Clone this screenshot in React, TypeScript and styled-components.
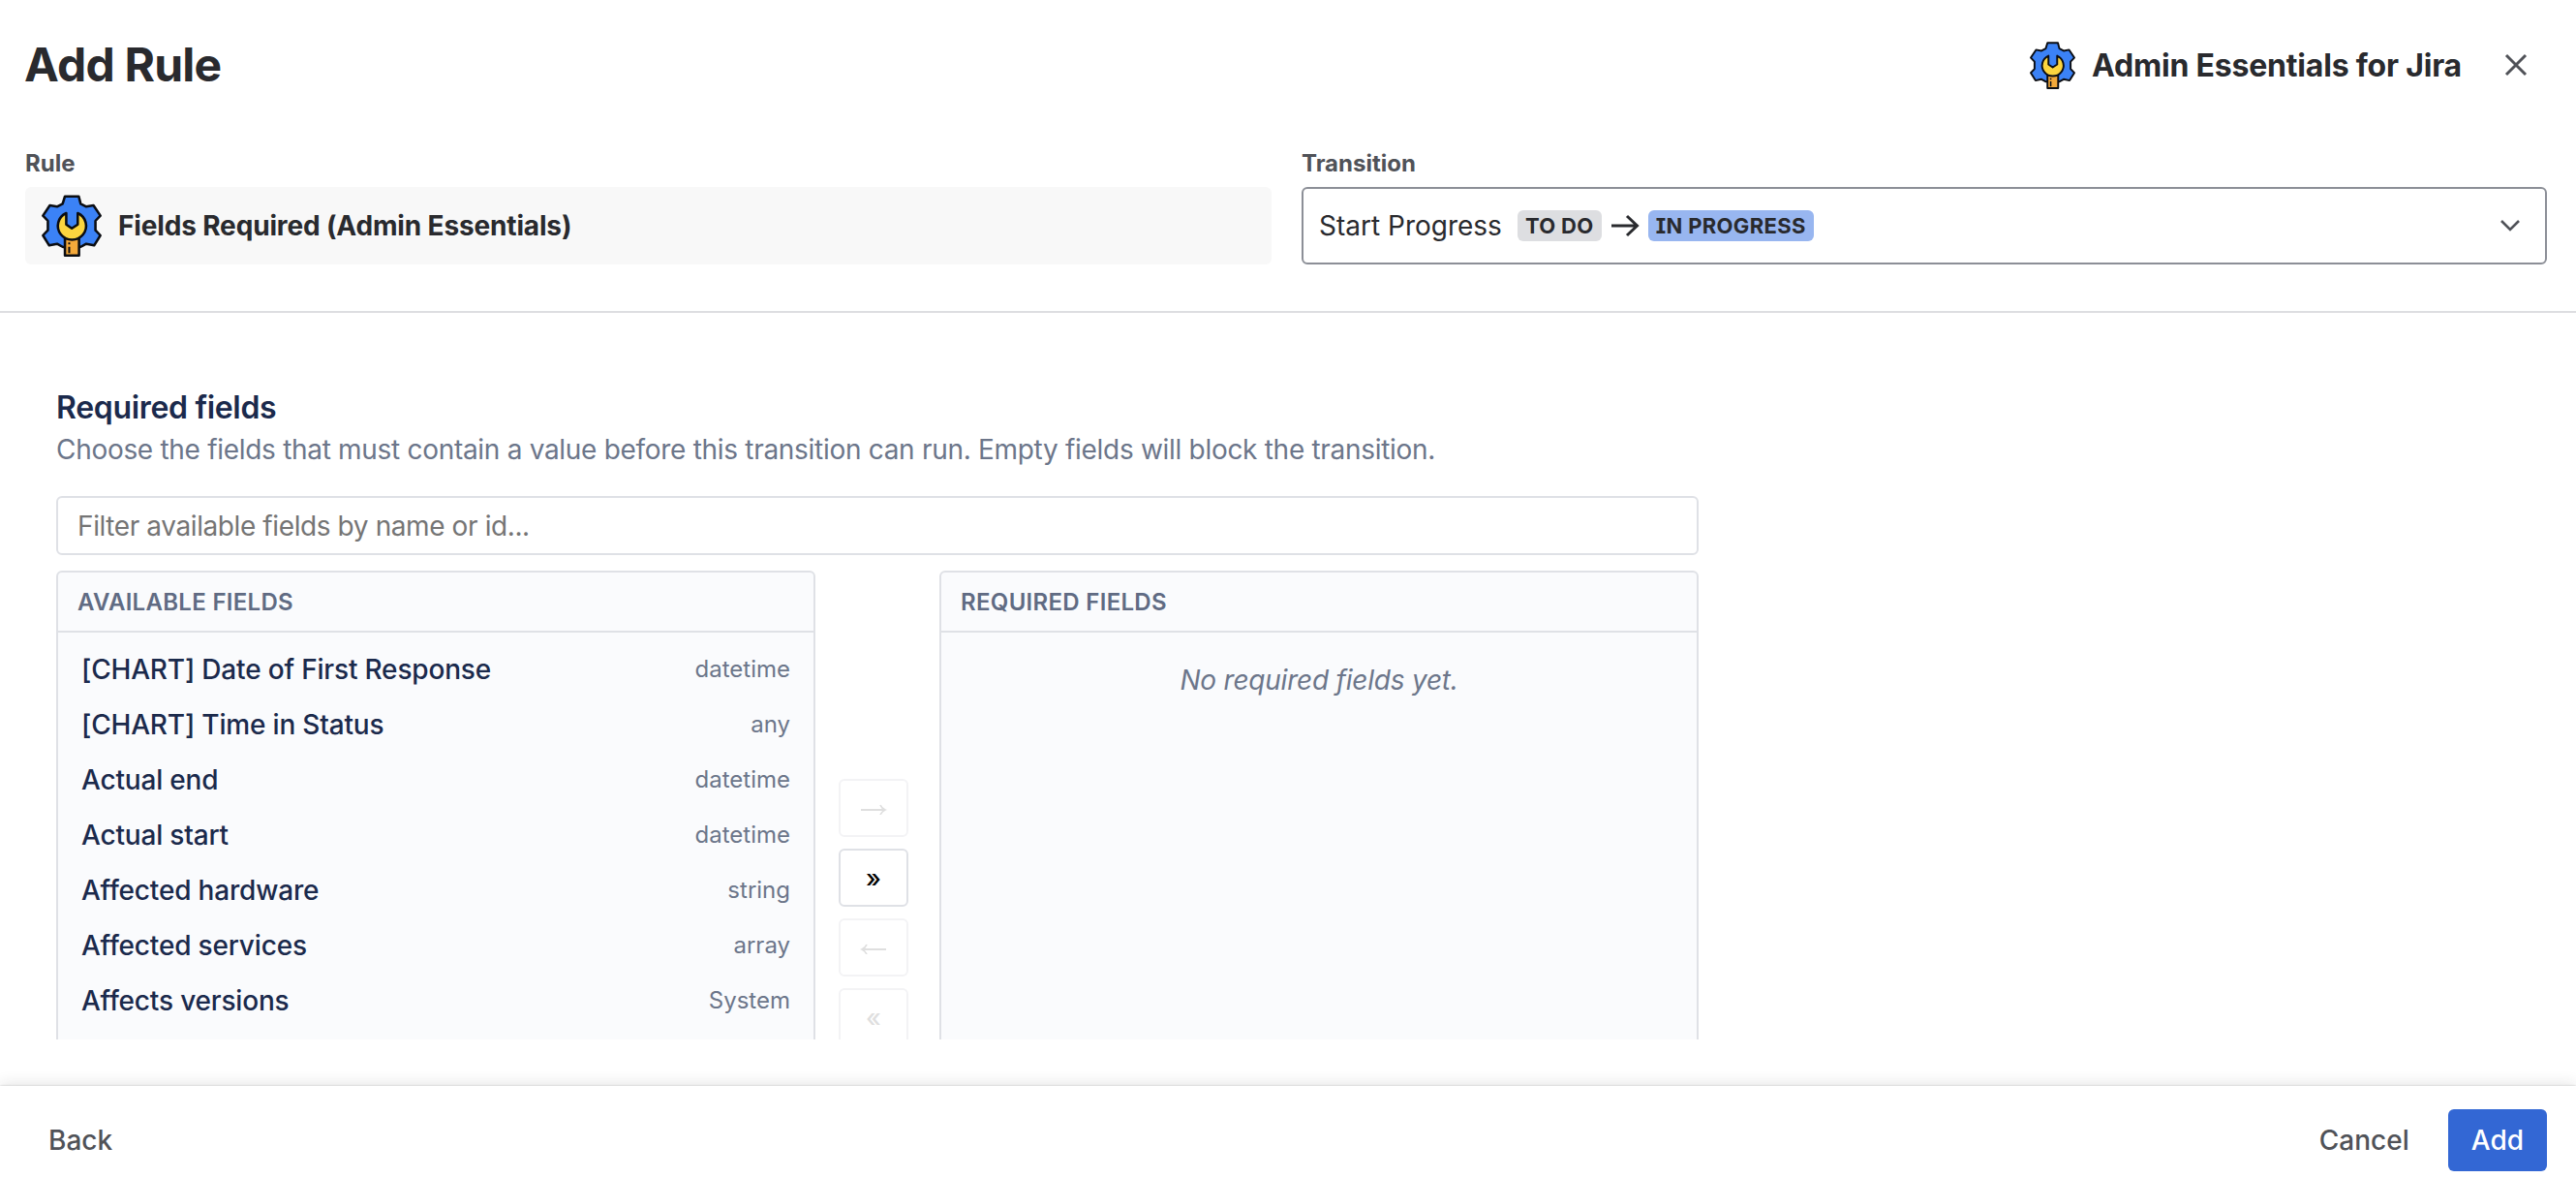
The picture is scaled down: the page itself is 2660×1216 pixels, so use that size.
import React from 'react'
import styled, { createGlobalStyle } from 'styled-components'

const GlobalStyle = createGlobalStyle`
  * {
    box-sizing: border-box;
  }

  body {
    margin: 0;
    background: #fff;
    color: #292a2e;
    font-family: Inter, 'Liberation Sans', sans-serif;
    font-size: 28px;
  }

  button,
  input {
    font-family: inherit;
  }
`

const Modal = styled.div`
  display: flex;
  flex-direction: column;
  height: 1216px;
  overflow: hidden;
`

const Header = styled.header`
  display: flex;
  align-items: center;
  justify-content: space-between;
  height: 134px;
  padding: 0 30px 0 25px;
`

const Title = styled.h1`
  margin: 0 0 2px;
  font-size: 48px;
  font-weight: 680;
  letter-spacing: -0.8px;
`

const Brand = styled.div`
  display: flex;
  align-items: center;
  font-size: 32px;
  font-weight: 660;
  letter-spacing: -0.2px;
`

const BrandName = styled.span`
  margin-left: 17px;
`

const CloseButton = styled.button`
  display: flex;
  align-items: center;
  justify-content: center;
  width: 64px;
  height: 64px;
  margin-left: 24px;
  border: 0;
  background: none;
`

const Selectors = styled.section`
  display: grid;
  grid-template-columns: 1287px 1286px;
  column-gap: 31px;
  height: 189px;
  padding: 20px 30px 0 26px;
  border-bottom: 2px solid #dddee1;
`

const Label = styled.div`
  height: 39px;
  color: #505258;
  font-size: 24px;
  font-weight: 653;
  line-height: 29px;
`

const RuleBox = styled.div`
  display: flex;
  align-items: center;
  height: 80px;
  padding-left: 17px;
  border-radius: 6px;
  background: #f8f8f8;
  font-weight: 653;
  letter-spacing: -0.15px;
`

const RuleName = styled.span`
  margin-left: 17px;
`

const TransitionSelect = styled.div`
  display: flex;
  align-items: center;
  height: 80px;
  padding: 0 26px 0 16px;
  border: 2px solid #8c8f97;
  border-radius: 6px;
`

const TransitionName = styled.span`
  margin-right: 16px;
`

/* cv08 gives the capital I its serifs */
const Lozenge = styled.span<{ $tone: string }>`
  height: 32px;
  padding: 0 8px;
  border-radius: 6px;
  background: ${({ $tone }) => $tone};
  font-size: 22px;
  font-weight: 680;
  line-height: 32px;
  letter-spacing: 0.35px;
  font-feature-settings: 'cv08';
`

const ArrowIcon = styled.svg`
  margin: 0 9px;
`

const ChevronIcon = styled.svg`
  margin-left: auto;
`

const Content = styled.main`
  flex: 1;
  min-height: 0;
  margin-bottom: 48px;
  padding: 76px 0 0 58px;
  overflow: hidden;
`

const SectionTitle = styled.h2`
  margin: 0;
  color: #1b2a4c;
  font-size: 32px;
  font-weight: 620;
  line-height: 44px;
  letter-spacing: -0.32px;
`

const Description = styled.p`
  margin: 0 0 27px;
  color: #6c768a;
  line-height: 42px;
  letter-spacing: -0.3px;
`

const FilterInput = styled.input`
  display: block;
  width: 1696px;
  height: 61px;
  margin-bottom: 16px;
  padding: 0 20px;
  border: 2px solid #dfe1e6;
  border-radius: 6px;
  font-size: 28px;
  letter-spacing: -0.4px;

  &::placeholder {
    color: #757575;
  }
`

const Picker = styled.div`
  display: grid;
  grid-template-columns: 784px 80px 784px;
  column-gap: 24px;
  width: 1696px;
  height: 640px;
`

const Panel = styled.div`
  border: 2px solid #dfe1e6;
  border-radius: 6px;
  background: #fafbfd;
`

const PanelHeader = styled.div`
  height: 62px;
  padding: 1px 0 0 20px;
  border-bottom: 2px solid #dfe1e6;
  color: #606b83;
  font-size: 24px;
  font-weight: 620;
  line-height: 60px;
  letter-spacing: 0.3px;
`

const FieldList = styled.ul`
  margin: 0;
  padding: 9px 24px 0 24px;
  list-style: none;
`

const FieldRow = styled.li`
  display: flex;
  align-items: center;
  justify-content: space-between;
  height: 57px;
  color: #1b2a4c;
  font-weight: 500;
  letter-spacing: -0.18px;
`

const FieldType = styled.span`
  color: #6c768a;
  font-size: 24px;
  font-weight: 400;
  letter-spacing: 0;
`

const EmptyText = styled.div`
  padding-top: 28px;
  color: #6c768a;
  font-style: italic;
  line-height: 42px;
  letter-spacing: -0.22px;
  text-align: center;
`

const Actions = styled.div`
  display: flex;
  flex-direction: column;
  gap: 12px;
  padding-top: 215px;
`

const ActionButton = styled.button`
  display: flex;
  align-items: center;
  justify-content: center;
  width: 72px;
  height: 60px;
  padding: 0;
  border: 2px solid #dfe1e6;
  border-radius: 6px;
  background: #fff;
  color: #000;
  font-size: 26px;
  font-weight: 500;

  &:disabled {
    border-color: #f3f3f5;
    color: #dfdfdf;
  }
`

const Footer = styled.footer`
  display: flex;
  align-items: flex-start;
  height: 95px;
  padding: 24px 30px 0 50px;
  box-shadow: 0 0 2px rgba(30, 31, 33, 0.22), 0 -2px 14px rgba(30, 31, 33, 0.12);
`

const FooterButton = styled.button<{ $primary?: boolean }>`
  height: 64px;
  padding: ${({ $primary }) => ($primary ? '0 24px' : '0')};
  border: 0;
  border-radius: 6px;
  background: ${({ $primary }) => ($primary ? '#3367d4' : 'none')};
  color: ${({ $primary }) => ($primary ? '#fff' : '#505258')};
  font-size: 28px;
  font-weight: 500;
`

const FooterEnd = styled.div`
  display: flex;
  gap: 40px;
  margin-left: auto;
`

const GearLogo: React.FC<{ width: number; height: number }> = ({ width, height }) => (
  <svg width={width} height={height} viewBox="40 33 183 192" preserveAspectRatio="none">
    <g stroke="#0b0d12" strokeWidth="7.5" strokeLinejoin="round">
      <path
        fill="#3b82f6"
        d="M111 38H153L159 61L176 70L198 66L219 98L204 114V143L219 159L200 190L176 185L158 195H105L87 185L63 190L44 159L59 143V114L44 98L65 66L87 70L104 61Z"
      />
      <path fill="#f4a93a" d="M111 168H154V221H111Z" />
      <path fill="#fcd53f" d="M115 90A43 43 0 1 0 150 90V125L132 137L115 125Z" />
    </g>
    <path d="M124 181V187M124 194V214" stroke="#0b0d12" strokeWidth="6" />
  </svg>
)

const MoveIcon: React.FC<{ back?: boolean }> = ({ back }) => (
  <svg width="28" height="14" viewBox="0 0 28 14" fill="none" stroke="currentColor" strokeWidth="1.8">
    <path d={back ? 'M27 9H2M7 4Q5.500 7.500 2 9Q5.500 10.500 7 14' : 'M1 9H26M21 4Q22.500 7.500 26 9Q22.500 10.500 21 14'} />
  </svg>
)

interface Field {
  name: string
  type: string
}

const fields: Field[] = [
  { name: '[CHART] Date of First Response', type: 'datetime' },
  { name: '[CHART] Time in Status', type: 'any' },
  { name: 'Actual end', type: 'datetime' },
  { name: 'Actual start', type: 'datetime' },
  { name: 'Affected hardware', type: 'string' },
  { name: 'Affected services', type: 'array' },
  { name: 'Affects versions', type: 'System' },
]

const App: React.FC = () => {
  return (
    <>
      <GlobalStyle />
      <Modal>
        <Header>
          <Title>Add Rule</Title>
          <Brand>
            <GearLogo width={47} height={49} />
            <BrandName>Admin Essentials for Jira</BrandName>
            <CloseButton aria-label="Close">
              <svg width="24" height="24" viewBox="0 0 24 24" fill="none" stroke="#505258" strokeWidth="3">
                <path d="M2 2L22 22M22 2L2 22" />
              </svg>
            </CloseButton>
          </Brand>
        </Header>
        <Selectors>
          <div>
            <Label>Rule</Label>
            <RuleBox>
              <GearLogo width={62} height={64} />
              <RuleName>Fields Required (Admin Essentials)</RuleName>
            </RuleBox>
          </div>
          <div>
            <Label>Transition</Label>
            <TransitionSelect>
              <TransitionName>Start Progress</TransitionName>
              <Lozenge $tone="#dddee1">TO DO</Lozenge>
              <ArrowIcon width="30" height="24" viewBox="0 0 30 24" fill="none" stroke="#292a2e" strokeWidth="3">
                <path d="M1 12H27M17 2L27.5 12L17 22" />
              </ArrowIcon>
              <Lozenge $tone="#98b6f0">IN PROGRESS</Lozenge>
              <ChevronIcon width="20" height="12" viewBox="0 0 20 12" fill="none" stroke="#505258" strokeWidth="2.6">
                <path d="M1 1L10 10L19 1" />
              </ChevronIcon>
            </TransitionSelect>
          </div>
        </Selectors>
        <Content>
          <SectionTitle>Required fields</SectionTitle>
          <Description>
            Choose the fields that must contain a value before this transition can run. Empty fields will block the
            transition.
          </Description>
          <FilterInput placeholder="Filter available fields by name or id..." />
          <Picker>
            <Panel>
              <PanelHeader>AVAILABLE FIELDS</PanelHeader>
              <FieldList>
                {fields.map((field) => (
                  <FieldRow key={field.name}>
                    {field.name}
                    <FieldType>{field.type}</FieldType>
                  </FieldRow>
                ))}
              </FieldList>
            </Panel>
            <Actions>
              <ActionButton disabled aria-label="Add selected">
                <MoveIcon />
              </ActionButton>
              <ActionButton>»</ActionButton>
              <ActionButton disabled aria-label="Remove selected">
                <MoveIcon back />
              </ActionButton>
              <ActionButton disabled>«</ActionButton>
            </Actions>
            <Panel>
              <PanelHeader>REQUIRED FIELDS</PanelHeader>
              <EmptyText>No required fields yet.</EmptyText>
            </Panel>
          </Picker>
        </Content>
        <Footer>
          <FooterButton>Back</FooterButton>
          <FooterEnd>
            <FooterButton>Cancel</FooterButton>
            <FooterButton $primary>Add</FooterButton>
          </FooterEnd>
        </Footer>
      </Modal>
    </>
  )
}

export default App
